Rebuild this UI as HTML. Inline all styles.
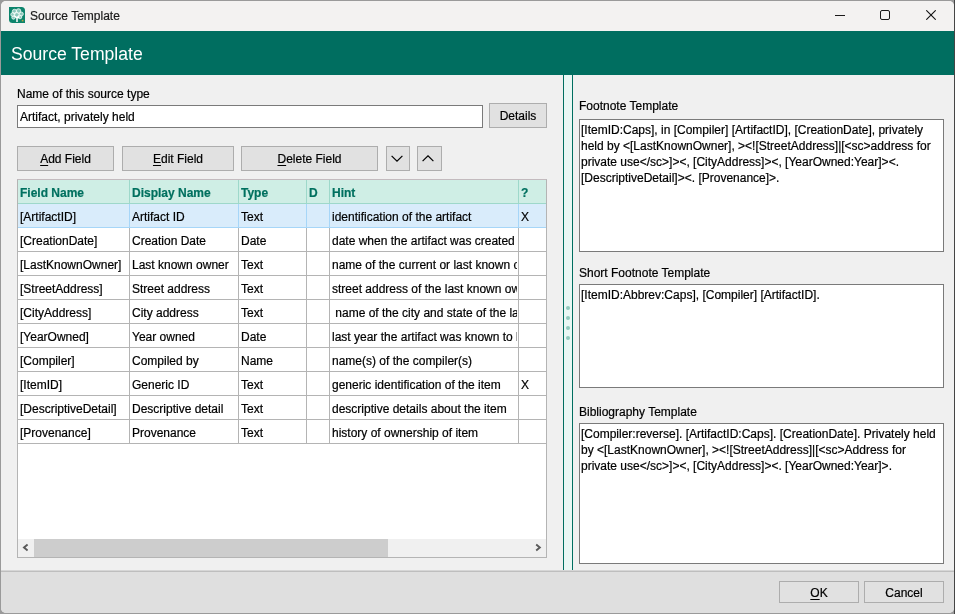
<!DOCTYPE html>
<html><head><meta charset="utf-8">
<style>
*{margin:0;padding:0;box-sizing:border-box}
html,body{-webkit-text-stroke:0.2px currentColor;width:955px;height:614px;overflow:hidden;background:#9a9a9a;font-family:"Liberation Sans",sans-serif;font-size:12px;color:#000}
.a{position:absolute}
#win{will-change:transform;position:absolute;left:1px;top:1px;width:953px;height:612px;background:#f0f0f0;overflow:hidden;border-radius:5px}
#title{position:absolute;left:0;top:0;width:953px;height:30px;background:#f3f2f1}
#green{position:absolute;left:0;top:30px;width:953px;height:44px;background:#006e60}
.t12{position:absolute;font-size:12px;line-height:16px;white-space:nowrap}
.btn{position:absolute;background:#e1e1e1;border:1px solid #adadad}
.btn span{position:absolute;left:0;right:0;text-align:center;line-height:16px;white-space:nowrap}
u{text-decoration:underline;text-decoration-thickness:1px;text-underline-offset:2px}
.ta{position:absolute;background:#fff;border:1px solid #7a7a7a}
.ta div{position:absolute;left:1px;top:2px;line-height:16px;white-space:nowrap}
.hdr{position:absolute;background:#cfeee5}
.sel{position:absolute;background:#d9ecfb}
.ht{position:absolute;font-weight:bold;color:#00705f;line-height:16px;white-space:nowrap;overflow:hidden}
.ct{position:absolute;line-height:16px;white-space:nowrap;overflow:hidden;color:#000}
.vl{position:absolute;width:1px}
.hv{background:#9ed8ca}
.hl{position:absolute;height:1px}
</style></head><body>
<div class="a" style="left:954px;top:0;width:1px;height:614px;background:#454545"></div>
<div id="win">
  <div id="title">
    <svg class="a" style="left:8px;top:6px" width="16" height="16" viewBox="0 0 16 16">
      <path d="M0 0H12.5A3.5 3.5 0 0 1 16 3.5V16H3.5A3.5 3.5 0 0 1 0 12.5Z" fill="#0c846c"/>
      <g fill="#e6f5f1" fill-opacity="0.6" stroke="#f2fbf8" stroke-width="0.8">
        <circle cx="5.5" cy="4.5" r="2.2"/><circle cx="9.5" cy="4" r="2.3"/><circle cx="12.3" cy="7" r="2"/>
        <circle cx="3.8" cy="7.5" r="2"/><circle cx="7.5" cy="7.5" r="2.3"/><circle cx="11" cy="10" r="1.8"/>
        <circle cx="4.5" cy="10.5" r="1.7"/>
      </g>
      <path d="M8 15V11L5.5 9M8 11L10.5 9.5" stroke="#fff" stroke-width="1.5" fill="none"/>
      <rect x="12.8" y="12.8" width="1.6" height="1.6" fill="#b9a33c"/>
    </svg>
    <div class="t12" style="left:29px;top:7px;color:#1a1a1a">Source Template</div>
    <!-- min -->
    <div class="a" style="left:834px;top:14px;width:10px;height:1px;background:#1a1a1a"></div>
    <div class="a" style="left:879px;top:9px;width:10px;height:10px;border:1px solid #1a1a1a;border-radius:2px"></div>
    <svg class="a" style="left:925px;top:9px" width="10" height="10" viewBox="0 0 10 10"><path d="M0.3 0.3L9.7 9.7M9.7 0.3L0.3 9.7" stroke="#111" stroke-width="1.1"/></svg>
  </div>
  <div id="green">
    <div class="a" style="left:10px;top:13px;font-size:17.6px;line-height:20px;color:#fff;white-space:nowrap;-webkit-text-stroke:0">Source Template</div>
  </div>

  <!-- left panel -->
  <div class="t12" style="left:16px;top:85px">Name of this source type</div>
  <div class="a" style="left:16px;top:104px;width:466px;height:23px;background:#fff;border:1px solid #7a7a7a"></div>
  <div class="t12" style="left:19px;top:108px">Artifact, privately held</div>
  <div class="btn" style="left:488px;top:102px;width:58px;height:25px"><span style="top:4px">Details</span></div>

  <div class="btn" style="left:16px;top:145px;width:97px;height:25px"><span style="top:4px"><u>A</u>dd Field</span></div>
  <div class="btn" style="left:121px;top:145px;width:112px;height:25px"><span style="top:4px"><u>E</u>dit Field</span></div>
  <div class="btn" style="left:240px;top:145px;width:137px;height:25px"><span style="top:4px"><u>D</u>elete Field</span></div>
  <div class="btn" style="left:385px;top:145px;width:24px;height:25px">
    <svg class="a" style="left:4px;top:8px" width="12" height="8" viewBox="0 0 12 8"><path d="M0.6 0.8L6 6.2L11.4 0.8" fill="none" stroke="#000" stroke-width="1.2"/></svg>
  </div>
  <div class="btn" style="left:416px;top:145px;width:25px;height:25px">
    <svg class="a" style="left:4px;top:8px" width="12" height="8" viewBox="0 0 12 8"><path d="M0.6 6.2L6 0.8L11.4 6.2" fill="none" stroke="#000" stroke-width="1.2"/></svg>
  </div>

  <!-- table -->
  <div class="a" style="left:16px;top:178px;width:530px;height:379px;background:#fff;border:1px solid #b4b4b4;border-top-color:#c3babe"></div>
  <div id="tbl" class="a" style="left:-1px;top:-1px">
<div class="hdr" style="left:18px;top:180px;width:528px;height:23px"></div>
<div class="ht" style="left:20px;top:185px;width:108px">Field Name</div>
<div class="ht" style="left:132px;top:185px;width:105px">Display Name</div>
<div class="ht" style="left:241px;top:185px;width:64px">Type</div>
<div class="ht" style="left:309px;top:185px;width:19px">D</div>
<div class="ht" style="left:332px;top:185px;width:185px">Hint</div>
<div class="ht" style="left:521px;top:185px;width:24px">?</div>
<div class="vl hv" style="left:129px;top:180px;height:23px"></div>
<div class="vl hv" style="left:238px;top:180px;height:23px"></div>
<div class="vl hv" style="left:306px;top:180px;height:23px"></div>
<div class="vl hv" style="left:329px;top:180px;height:23px"></div>
<div class="vl hv" style="left:518px;top:180px;height:23px"></div>
<div class="hl" style="left:18px;top:203px;width:528px;background:#9ed8ca"></div>
<div class="sel" style="left:18px;top:204px;width:528px;height:23px"></div>
<div class="ct" style="left:20px;top:209px;width:108px">[ArtifactID]</div>
<div class="ct" style="left:132px;top:209px;width:105px">Artifact ID</div>
<div class="ct" style="left:241px;top:209px;width:64px">Text</div>
<div class="ct" style="left:309px;top:209px;width:19px"></div>
<div class="ct" style="left:332px;top:209px;width:185px">identification of the artifact</div>
<div class="ct" style="left:521px;top:209px;width:24px">X</div>
<div class="vl" style="left:129px;top:204px;height:23px;background:#a6d6f8"></div>
<div class="vl" style="left:238px;top:204px;height:23px;background:#a6d6f8"></div>
<div class="vl" style="left:306px;top:204px;height:23px;background:#a6d6f8"></div>
<div class="vl" style="left:329px;top:204px;height:23px;background:#a6d6f8"></div>
<div class="vl" style="left:518px;top:204px;height:23px;background:#a6d6f8"></div>
<div class="hl" style="left:18px;top:227px;width:528px;background:#a6d6f8"></div>
<div class="ct" style="left:20px;top:233px;width:108px">[CreationDate]</div>
<div class="ct" style="left:132px;top:233px;width:105px">Creation Date</div>
<div class="ct" style="left:241px;top:233px;width:64px">Date</div>
<div class="ct" style="left:309px;top:233px;width:19px"></div>
<div class="ct" style="left:332px;top:233px;width:185px">date when the artifact was created</div>
<div class="ct" style="left:521px;top:233px;width:24px"></div>
<div class="vl" style="left:129px;top:228px;height:23px;background:#b4b4b4"></div>
<div class="vl" style="left:238px;top:228px;height:23px;background:#b4b4b4"></div>
<div class="vl" style="left:306px;top:228px;height:23px;background:#b4b4b4"></div>
<div class="vl" style="left:329px;top:228px;height:23px;background:#b4b4b4"></div>
<div class="vl" style="left:518px;top:228px;height:23px;background:#b4b4b4"></div>
<div class="hl" style="left:18px;top:251px;width:528px;background:#b4b4b4"></div>
<div class="ct" style="left:20px;top:257px;width:108px">[LastKnownOwner]</div>
<div class="ct" style="left:132px;top:257px;width:105px">Last known owner</div>
<div class="ct" style="left:241px;top:257px;width:64px">Text</div>
<div class="ct" style="left:309px;top:257px;width:19px"></div>
<div class="ct" style="left:332px;top:257px;width:185px">name of the current or last known owner</div>
<div class="ct" style="left:521px;top:257px;width:24px"></div>
<div class="vl" style="left:129px;top:252px;height:23px;background:#b4b4b4"></div>
<div class="vl" style="left:238px;top:252px;height:23px;background:#b4b4b4"></div>
<div class="vl" style="left:306px;top:252px;height:23px;background:#b4b4b4"></div>
<div class="vl" style="left:329px;top:252px;height:23px;background:#b4b4b4"></div>
<div class="vl" style="left:518px;top:252px;height:23px;background:#b4b4b4"></div>
<div class="hl" style="left:18px;top:275px;width:528px;background:#b4b4b4"></div>
<div class="ct" style="left:20px;top:281px;width:108px">[StreetAddress]</div>
<div class="ct" style="left:132px;top:281px;width:105px">Street address</div>
<div class="ct" style="left:241px;top:281px;width:64px">Text</div>
<div class="ct" style="left:309px;top:281px;width:19px"></div>
<div class="ct" style="left:332px;top:281px;width:185px">street address of the last known owner</div>
<div class="ct" style="left:521px;top:281px;width:24px"></div>
<div class="vl" style="left:129px;top:276px;height:23px;background:#b4b4b4"></div>
<div class="vl" style="left:238px;top:276px;height:23px;background:#b4b4b4"></div>
<div class="vl" style="left:306px;top:276px;height:23px;background:#b4b4b4"></div>
<div class="vl" style="left:329px;top:276px;height:23px;background:#b4b4b4"></div>
<div class="vl" style="left:518px;top:276px;height:23px;background:#b4b4b4"></div>
<div class="hl" style="left:18px;top:299px;width:528px;background:#b4b4b4"></div>
<div class="ct" style="left:20px;top:305px;width:108px">[CityAddress]</div>
<div class="ct" style="left:132px;top:305px;width:105px">City address</div>
<div class="ct" style="left:241px;top:305px;width:64px">Text</div>
<div class="ct" style="left:309px;top:305px;width:19px"></div>
<div class="ct" style="left:332px;top:305px;width:185px">&nbsp;name of the city and state of the last known owner</div>
<div class="ct" style="left:521px;top:305px;width:24px"></div>
<div class="vl" style="left:129px;top:300px;height:23px;background:#b4b4b4"></div>
<div class="vl" style="left:238px;top:300px;height:23px;background:#b4b4b4"></div>
<div class="vl" style="left:306px;top:300px;height:23px;background:#b4b4b4"></div>
<div class="vl" style="left:329px;top:300px;height:23px;background:#b4b4b4"></div>
<div class="vl" style="left:518px;top:300px;height:23px;background:#b4b4b4"></div>
<div class="hl" style="left:18px;top:323px;width:528px;background:#b4b4b4"></div>
<div class="ct" style="left:20px;top:329px;width:108px">[YearOwned]</div>
<div class="ct" style="left:132px;top:329px;width:105px">Year owned</div>
<div class="ct" style="left:241px;top:329px;width:64px">Date</div>
<div class="ct" style="left:309px;top:329px;width:19px"></div>
<div class="ct" style="left:332px;top:329px;width:185px">last year the artifact was known to be owned</div>
<div class="ct" style="left:521px;top:329px;width:24px"></div>
<div class="vl" style="left:129px;top:324px;height:23px;background:#b4b4b4"></div>
<div class="vl" style="left:238px;top:324px;height:23px;background:#b4b4b4"></div>
<div class="vl" style="left:306px;top:324px;height:23px;background:#b4b4b4"></div>
<div class="vl" style="left:329px;top:324px;height:23px;background:#b4b4b4"></div>
<div class="vl" style="left:518px;top:324px;height:23px;background:#b4b4b4"></div>
<div class="hl" style="left:18px;top:347px;width:528px;background:#b4b4b4"></div>
<div class="ct" style="left:20px;top:353px;width:108px">[Compiler]</div>
<div class="ct" style="left:132px;top:353px;width:105px">Compiled by</div>
<div class="ct" style="left:241px;top:353px;width:64px">Name</div>
<div class="ct" style="left:309px;top:353px;width:19px"></div>
<div class="ct" style="left:332px;top:353px;width:185px">name(s) of the compiler(s)</div>
<div class="ct" style="left:521px;top:353px;width:24px"></div>
<div class="vl" style="left:129px;top:348px;height:23px;background:#b4b4b4"></div>
<div class="vl" style="left:238px;top:348px;height:23px;background:#b4b4b4"></div>
<div class="vl" style="left:306px;top:348px;height:23px;background:#b4b4b4"></div>
<div class="vl" style="left:329px;top:348px;height:23px;background:#b4b4b4"></div>
<div class="vl" style="left:518px;top:348px;height:23px;background:#b4b4b4"></div>
<div class="hl" style="left:18px;top:371px;width:528px;background:#b4b4b4"></div>
<div class="ct" style="left:20px;top:377px;width:108px">[ItemID]</div>
<div class="ct" style="left:132px;top:377px;width:105px">Generic ID</div>
<div class="ct" style="left:241px;top:377px;width:64px">Text</div>
<div class="ct" style="left:309px;top:377px;width:19px"></div>
<div class="ct" style="left:332px;top:377px;width:185px">generic identification of the item</div>
<div class="ct" style="left:521px;top:377px;width:24px">X</div>
<div class="vl" style="left:129px;top:372px;height:23px;background:#b4b4b4"></div>
<div class="vl" style="left:238px;top:372px;height:23px;background:#b4b4b4"></div>
<div class="vl" style="left:306px;top:372px;height:23px;background:#b4b4b4"></div>
<div class="vl" style="left:329px;top:372px;height:23px;background:#b4b4b4"></div>
<div class="vl" style="left:518px;top:372px;height:23px;background:#b4b4b4"></div>
<div class="hl" style="left:18px;top:395px;width:528px;background:#b4b4b4"></div>
<div class="ct" style="left:20px;top:401px;width:108px">[DescriptiveDetail]</div>
<div class="ct" style="left:132px;top:401px;width:105px">Descriptive detail</div>
<div class="ct" style="left:241px;top:401px;width:64px">Text</div>
<div class="ct" style="left:309px;top:401px;width:19px"></div>
<div class="ct" style="left:332px;top:401px;width:185px">descriptive details about the item</div>
<div class="ct" style="left:521px;top:401px;width:24px"></div>
<div class="vl" style="left:129px;top:396px;height:23px;background:#b4b4b4"></div>
<div class="vl" style="left:238px;top:396px;height:23px;background:#b4b4b4"></div>
<div class="vl" style="left:306px;top:396px;height:23px;background:#b4b4b4"></div>
<div class="vl" style="left:329px;top:396px;height:23px;background:#b4b4b4"></div>
<div class="vl" style="left:518px;top:396px;height:23px;background:#b4b4b4"></div>
<div class="hl" style="left:18px;top:419px;width:528px;background:#b4b4b4"></div>
<div class="ct" style="left:20px;top:425px;width:108px">[Provenance]</div>
<div class="ct" style="left:132px;top:425px;width:105px">Provenance</div>
<div class="ct" style="left:241px;top:425px;width:64px">Text</div>
<div class="ct" style="left:309px;top:425px;width:19px"></div>
<div class="ct" style="left:332px;top:425px;width:185px">history of ownership of item</div>
<div class="ct" style="left:521px;top:425px;width:24px"></div>
<div class="vl" style="left:129px;top:420px;height:23px;background:#b4b4b4"></div>
<div class="vl" style="left:238px;top:420px;height:23px;background:#b4b4b4"></div>
<div class="vl" style="left:306px;top:420px;height:23px;background:#b4b4b4"></div>
<div class="vl" style="left:329px;top:420px;height:23px;background:#b4b4b4"></div>
<div class="vl" style="left:518px;top:420px;height:23px;background:#b4b4b4"></div>
<div class="hl" style="left:18px;top:443px;width:528px;background:#b4b4b4"></div>
  </div>
  <!-- scrollbar -->
  <div class="a" style="left:17px;top:538px;width:528px;height:18px;background:#f0f0f0"></div>
  <div class="a" style="left:33px;top:538px;width:354px;height:18px;background:#cdcdcd"></div>
  <svg class="a" style="left:20px;top:541px" width="10" height="10" viewBox="0 0 10 10"><path d="M6.6 2.6L3 5.5L6.6 8.4" fill="none" stroke="#5a5a5a" stroke-width="1.9"/></svg>
  <svg class="a" style="left:532px;top:541px" width="10" height="10" viewBox="0 0 10 10"><path d="M3.2 2.6L6.8 5.5L3.2 8.4" fill="none" stroke="#5a5a5a" stroke-width="1.9"/></svg>

  <!-- splitter -->
  <div class="a" style="left:562px;top:74px;width:10px;height:495px;background:#e9f7f4;border-left:1px solid #006e60;border-right:1px solid #006e60"></div>

  <div class="a" style="left:565px;top:305px;width:4px;height:4px;border-radius:2px;background:#8fc9bd"></div>
  <div class="a" style="left:565px;top:315px;width:4px;height:4px;border-radius:2px;background:#8fc9bd"></div>
  <div class="a" style="left:565px;top:325px;width:4px;height:4px;border-radius:2px;background:#8fc9bd"></div>
  <div class="a" style="left:565px;top:335px;width:4px;height:4px;border-radius:2px;background:#8fc9bd"></div>
  <!-- right panel -->
  <div class="t12" style="left:578px;top:97px">Footnote Template</div>
  <div class="ta" style="left:578px;top:118px;width:365px;height:133px"><div>[ItemID:Caps], in [Compiler] [ArtifactID], [CreationDate], privately<br>held by &lt;[LastKnownOwner], &gt;&lt;![StreetAddress]|[&lt;sc&gt;address for<br>private use&lt;/sc&gt;]&gt;&lt;, [CityAddress]&gt;&lt;, [YearOwned:Year]&gt;&lt;.<br>[DescriptiveDetail]&gt;&lt;. [Provenance]&gt;.</div></div>
  <div class="t12" style="left:578px;top:264px">Short Footnote Template</div>
  <div class="ta" style="left:578px;top:283px;width:365px;height:104px"><div>[ItemID:Abbrev:Caps], [Compiler] [ArtifactID].</div></div>
  <div class="t12" style="left:578px;top:403px">Bibliography Template</div>
  <div class="ta" style="left:578px;top:422px;width:365px;height:141px"><div>[Compiler:reverse]. [ArtifactID:Caps]. [CreationDate]. Privately held<br>by &lt;[LastKnownOwner], &gt;&lt;![StreetAddress]|[&lt;sc&gt;Address for<br>private use&lt;/sc&gt;]&gt;&lt;, [CityAddress]&gt;&lt;. [YearOwned:Year]&gt;.</div></div>

  <!-- bottom bar -->
  <div class="a" style="left:0;top:569px;width:953px;height:43px;background:#dfdfdf;border-top:1px solid #d6d6d6"></div>
  <div class="a" style="left:0;top:570px;width:953px;height:1px;background:#bebebe"></div>
  <div class="btn" style="left:778px;top:580px;width:80px;height:22px"><span style="top:3px"><u>O</u>K</span></div>
  <div class="btn" style="left:863px;top:580px;width:80px;height:22px"><span style="top:3px">Cancel</span></div>
</div>
</body></html>
